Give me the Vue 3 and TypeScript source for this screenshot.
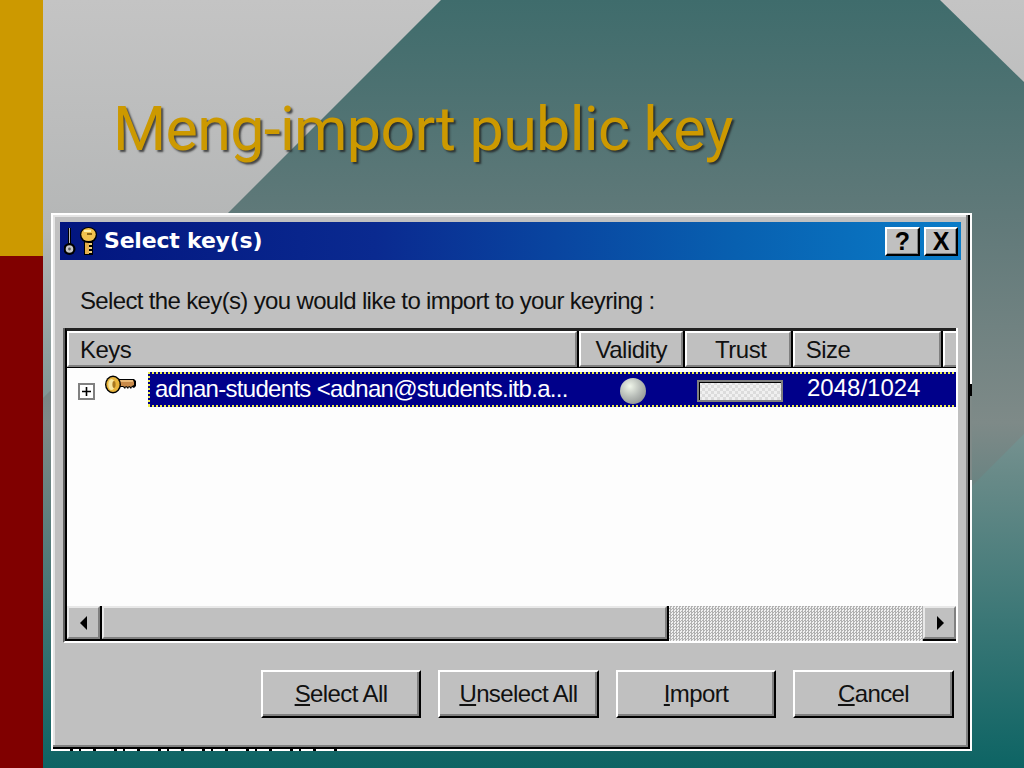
<template>
  <div class="slide">
    <svg class="backdrop" width="1024" height="768" viewBox="0 0 1024 768">
      <defs>
        <linearGradient id="greyFade" x1="0" y1="0" x2="0" y2="1">
          <stop offset="0" stop-color="#c4c4c4" />
          <stop offset="0.3" stop-color="#b4b6b6" />
          <stop offset="0.62" stop-color="#688a88" />
          <stop offset="1" stop-color="#0d6464" />
        </linearGradient>
        <linearGradient id="tealFade" x1="0" y1="0" x2="0" y2="1">
          <stop offset="0" stop-color="#3f6c6c" />
          <stop offset="0.3" stop-color="#627a7a" />
          <stop offset="0.55" stop-color="#7e8a88" />
          <stop offset="1" stop-color="#0d6464" />
        </linearGradient>
      </defs>
      <rect width="1024" height="768" fill="url(#greyFade)" />
      <polygon points="441,0 940,0 1024,82 1024,434 690,768 0,768 0,441" fill="url(#tealFade)" />
    </svg>

    <div class="side-bar">
      <div class="side-gold"></div>
      <div class="side-red"></div>
    </div>

    <h1 class="slide-title">Meng-import public key</h1>

    <div class="dialog">
      <div class="titlebar">
        <svg class="title-icon" width="34" height="30" viewBox="0 0 34 30">
          <rect x="4" y="2" width="3" height="18" fill="#000" />
          <rect x="5" y="2" width="1" height="17" fill="#b8b8b8" />
          <circle cx="5.5" cy="23" r="6" fill="#000" />
          <circle cx="5.5" cy="23" r="3.8" fill="#c8c8c8" />
          <circle cx="5.5" cy="23" r="1.4" fill="#606060" />
          <rect x="20" y="13" width="9" height="16" fill="#000" />
          <rect x="21" y="13" width="4" height="15" fill="#e6b04c" />
          <rect x="25" y="17" width="3" height="2" fill="#f0d080" />
          <rect x="25" y="21" width="3" height="2" fill="#f0d080" />
          <rect x="25" y="25" width="3" height="2" fill="#f0d080" />
          <ellipse cx="24.5" cy="9" rx="8.5" ry="8" fill="#000" />
          <ellipse cx="24.5" cy="8.5" rx="7.2" ry="6.6" fill="#f2c24e" />
          <rect x="20" y="4" width="7" height="2" fill="#fff0a8" />
          <rect x="23" y="7" width="5" height="2" fill="#8a6414" />
        </svg>
        <span class="title-text">Select key(s)</span>
        <div class="title-buttons">
          <button class="title-btn help">?</button>
          <button class="title-btn close">X</button>
        </div>
      </div>

      <p class="prompt">Select the key(s) you would like to import to your keyring :</p>

      <div class="list-frame">
        <div class="list-inner">
          <div class="headers">
            <div v-for="col in columns" :key="col.label" class="header-cell" :class="col.cls">{{ col.label }}</div>
            <div class="header-cell tail"></div>
          </div>
          <div class="rows">
            <div class="key-row">
              <span class="expander">
                <svg width="17" height="17" viewBox="0 0 17 17">
                  <rect x="1" y="1" width="15" height="15" fill="#fff" stroke="#808080" stroke-width="2" />
                  <path d="M4 8.5h9M8.5 4v9" stroke="#000" stroke-width="1.6" fill="none" />
                </svg>
              </span>
              <svg class="key-icon" width="31" height="20" viewBox="0 0 31 20">
                <path d="M12 4h17l2 2v5l-2 2-2-1-1 2-2-2-1 2-2-2-1 2-2-2h-6z" fill="#000" />
                <path d="M12 5h16l1 2v3l-2 1-1 1-2-1-1 1-2-1-1 1-2-1h-6z" fill="#c88a4a" />
                <path d="M14 5h14v2H14z" fill="#e8b878" />
                <ellipse cx="8" cy="9.5" rx="8" ry="9" fill="#000" />
                <ellipse cx="8" cy="9.5" rx="6.6" ry="7.6" fill="#e9b53c" />
                <ellipse cx="6.5" cy="9.5" rx="3.2" ry="5.5" fill="#f8e6a0" />
                <ellipse cx="9" cy="9.5" rx="1.6" ry="3.4" fill="#a87820" />
              </svg>
              <div class="selection">
                <span class="cell-name">adnan-students &lt;adnan@students.itb.a...</span>
                <span class="cell-validity"><i class="ball"></i></span>
                <span class="cell-trust"><i class="trust-bar"></i></span>
                <span class="cell-size">2048/1024</span>
              </div>
            </div>
          </div>
          <div class="scrollbar">
            <button class="arrow-btn">
              <svg width="8" height="14" viewBox="0 0 8 14"><path d="M7 0v14L0 7z" fill="#000" /></svg>
            </button>
            <div class="thumb"></div>
            <div class="track"></div>
            <button class="arrow-btn">
              <svg width="8" height="14" viewBox="0 0 8 14"><path d="M1 0v14l7-7z" fill="#000" /></svg>
            </button>
          </div>
        </div>
      </div>

      <div class="actions">
        <button v-for="b in actionButtons" :key="b.rest" class="action-btn" :style="{ width: b.width + 'px' }">
          <u>{{ b.mnemonic }}</u>{{ b.rest }}
        </button>
      </div>
    </div>
    <div class="under-dialog"></div>
    <div class="edge-notch"></div>
  </div>
</template>

<script setup lang="ts">
const columns = [
  { label: 'Keys', cls: 'keys' },
  { label: 'Validity', cls: 'validity' },
  { label: 'Trust', cls: 'trust' },
  { label: 'Size', cls: 'size' },
]

const actionButtons = [
  { mnemonic: 'S', rest: 'elect All', width: 160 },
  { mnemonic: 'U', rest: 'nselect All', width: 161 },
  { mnemonic: 'I', rest: 'mport', width: 160 },
  { mnemonic: 'C', rest: 'ancel', width: 161 },
]
</script>

<style>
html, body {
  margin: 0;
  overflow: hidden;
}
</style>

<style scoped>
.slide {
  position: relative;
  width: 1024px;
  height: 768px;
  overflow: hidden;
  font-family: "Liberation Sans", Arial, sans-serif;
}

.backdrop {
  position: absolute;
  inset: 0;
}

.side-bar {
  position: absolute;
  left: 0;
  top: 0;
  width: 43px;
  height: 768px;
  display: flex;
  flex-direction: column;
}
.side-gold { height: 256px; background: #cc9900; }
.side-red { flex: 1; background: #800000; }

.slide-title {
  position: absolute;
  left: 113px;
  top: 93px;
  margin: 0;
  font-family: Roboto, "Noto Sans", sans-serif;
  font-weight: 400;
  font-size: 61px;
  line-height: 72px;
  letter-spacing: -0.7px;
  color: #cc9900;
  text-shadow: 2px 2px 2px rgba(30, 30, 30, 0.75);
  white-space: nowrap;
}

.dialog {
  position: absolute;
  left: 51px;
  top: 213px;
  width: 921px;
  height: 538px;
  box-sizing: border-box;
  padding: 7px 9px 0 7px;
  background: #c0c0c0;
  border: 2px solid #fff;
  box-shadow: inset -2px -2px 0 #000, inset -4px -4px 0 #808080, inset 2px 2px 0 #e4e4e4;
  display: flex;
  flex-direction: column;
}

.under-dialog {
  position: absolute;
  left: 52px;
  top: 749px;
  width: 285px;
  height: 2px;
  background: repeating-linear-gradient(90deg, #fff 0 18px, #000 18px 21px, #fff 21px 27px, #000 27px 29px, #fff 29px 41px, #000 41px 44px);
}

.edge-notch {
  position: absolute;
  left: 970px;
  top: 384px;
  width: 2px;
  height: 96px;
  background: linear-gradient(180deg, #000 0 12px, #7f8a88 12px);
}

.titlebar {
  height: 38px;
  flex: none;
  display: flex;
  align-items: center;
  background: linear-gradient(90deg, #02157f 0%, #0a2a90 35%, #0860b0 75%, #0a7cc8 100%);
  color: #fff;
}
.title-icon { margin-left: 4px; flex: none; }
.title-text {
  margin-left: 6px;
  font-family: "DejaVu Sans", sans-serif;
  font-weight: 700;
  font-size: 22px;
  letter-spacing: -0.2px;
  position: relative;
  top: -1px;
}
.title-buttons {
  margin-left: auto;
  margin-right: 3px;
  display: flex;
  gap: 4px;
}
.title-btn {
  height: 29px;
  padding: 0;
  box-sizing: border-box;
  background: #c0c0c0;
  border: 2px solid #fff;
  border-right-color: #000;
  border-bottom-color: #000;
  box-shadow: inset -1px -1px 0 #808080;
  font-family: "Liberation Sans", sans-serif;
  font-weight: 700;
  font-size: 25px;
  line-height: 24px;
  color: #000;
}
.title-btn.help { width: 35px; }
.title-btn.close { width: 34px; }

.prompt {
  margin: 26px 0 0 20px;
  font-size: 24px;
  line-height: 29px;
  letter-spacing: -0.65px;
  color: #111;
  white-space: nowrap;
}

.list-frame {
  margin: 13px 3px 0 3px;
  height: 315px;
  box-sizing: border-box;
  border: 2px solid #fff;
  border-top: none;
  border-left: 2px solid #606060;
  flex: none;
}
.list-inner {
  height: 100%;
  box-sizing: border-box;
  border-top: 3px solid #222;
  border-left: 2px solid #000;
  display: flex;
  flex-direction: column;
  background: #fff;
}

.headers {
  height: 37px;
  flex: none;
  display: flex;
  background: #000;
}
.header-cell {
  box-sizing: border-box;
  height: 36px;
  padding-left: 11px;
  background: #c0c0c0;
  border: 2px solid #fff;
  border-right-color: #808080;
  border-bottom-color: #808080;
  margin-right: 2px;
  font-size: 24px;
  line-height: 33px;
  letter-spacing: -0.5px;
  color: #111;
}
.header-cell.keys { width: 513px; }
.header-cell.validity { width: 104px; padding-left: 14px; }
.header-cell.trust { width: 106px; padding-left: 28px; }
.header-cell.size { width: 149px; }
.header-cell.tail { flex: 1; margin-right: 0; border-right: none; }

.rows {
  flex: 1;
  background: #fdfdfd;
  padding-top: 4px;
}
.key-row {
  display: flex;
  height: 35px;
  align-items: flex-start;
}
.expander {
  margin: 11px 0 0 11px;
  height: 17px;
  display: block;
}
.key-icon {
  margin: 3px 0 0 10px;
  flex: none;
}
.selection {
  margin-left: 12px;
  flex: 1;
  height: 35px;
  box-sizing: border-box;
  padding-left: 2px;
  background:
    repeating-linear-gradient(90deg, #eeee50 0 2px, #00008a 2px 4px) top / 100% 2px no-repeat,
    repeating-linear-gradient(90deg, #eeee50 0 2px, #00008a 2px 4px) bottom / 100% 2px no-repeat,
    repeating-linear-gradient(180deg, #eeee50 0 2px, #00008a 2px 4px) left / 2px 100% no-repeat,
    #00008a;
  color: #fff;
  display: flex;
  align-items: center;
  font-size: 24px;
  letter-spacing: -0.7px;
  white-space: nowrap;
}
.cell-name { width: 420px; padding-left: 5px; margin-top: -2px; flex: none; box-sizing: border-box; overflow: hidden; }
.cell-validity { width: 126px; flex: none; display: flex; justify-content: center; margin-top: 3px; }
.ball {
  display: block;
  width: 26px;
  height: 26px;
  border-radius: 50%;
  background: radial-gradient(circle at 38% 32%, #f0f6ea 0%, #b8bdb8 45%, #7c8080 100%);
}
.cell-trust { width: 110px; flex: none; padding-left: 1px; box-sizing: border-box; margin-top: 3px; }
.trust-bar {
  display: block;
  width: 86px;
  height: 22px;
  box-sizing: border-box;
  border: 2px solid #808080;
  box-shadow: inset 1px 1px 0 #000;
  background: repeating-conic-gradient(#dcdcdc 0% 25%, #f0f0f0 0% 50%) 0 0 / 6px 6px;
}
.cell-size { padding-left: 1px; letter-spacing: 0; margin-top: -4px; }

.scrollbar {
  height: 35px;
  flex: none;
  display: flex;
  background: #000;
}
.arrow-btn {
  width: 33px;
  height: 33px;
  padding: 0;
  box-sizing: border-box;
  background: #c0c0c0;
  border: 2px solid #e8e8e8;
  border-right-color: #808080;
  border-bottom-color: #808080;
  display: flex;
  align-items: center;
  justify-content: center;
  flex: none;
}
.thumb {
  width: 565px;
  height: 33px;
  margin-left: 2px;
  box-sizing: border-box;
  background: #c0c0c0;
  border: 2px solid #e8e8e8;
  border-right-color: #808080;
  border-bottom-color: #808080;
  flex: none;
}
.track {
  flex: 1;
  height: 35px;
  margin-left: 2px;
  background: repeating-conic-gradient(#b0b0b0 0% 25%, #f0f0f0 0% 50%) 0 0 / 3px 3px;
}

.actions {
  margin-top: 27px;
  margin-right: 7px;
  display: flex;
  justify-content: flex-end;
  gap: 17px;
}
.action-btn {
  height: 48px;
  box-sizing: border-box;
  padding: 0;
  background: #c0c0c0;
  border: 2px solid #fff;
  border-right-color: #000;
  border-bottom-color: #000;
  box-shadow: inset -2px -2px 0 #808080;
  font-family: "Liberation Sans", sans-serif;
  font-size: 24px;
  letter-spacing: -0.6px;
  color: #111;
}
</style>
